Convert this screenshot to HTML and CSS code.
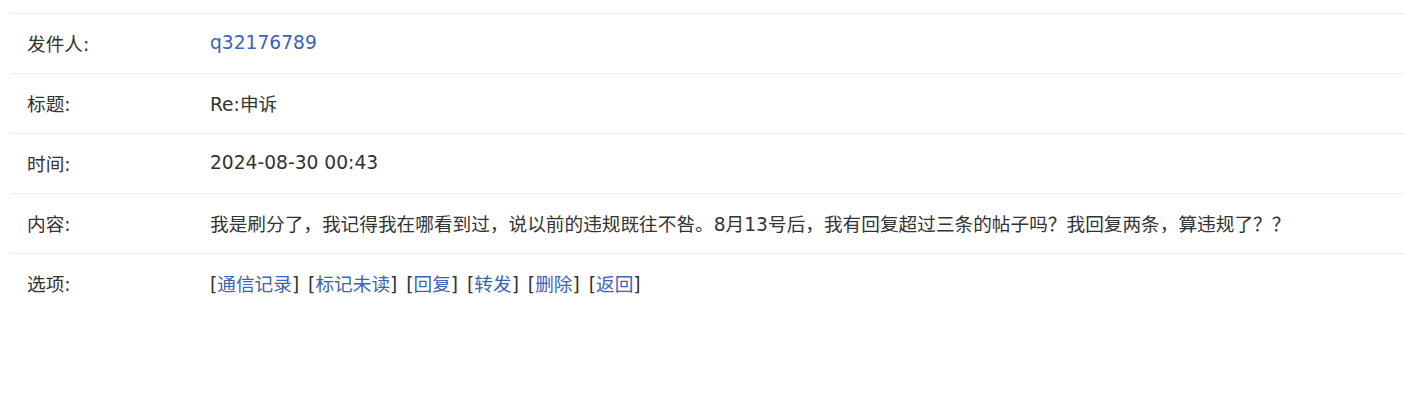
FILE: index.html
```html
<!DOCTYPE html>
<html lang="zh-CN">
<head>
  <meta charset="UTF-8"/>
  <title>短消息</title>
  <link rel="stylesheet" href="styles.css">
</head>
<body>
  <div class="msg-table">
    <div class="row">
      <div class="label">发件人:</div>
      <div class="value"><a href="#">q32176789</a></div>
    </div>
    <div class="row">
      <div class="label">标题:</div>
      <div class="value">Re:申诉</div>
    </div>
    <div class="row">
      <div class="label">时间:</div>
      <div class="value">2024-08-30 00:43</div>
    </div>
    <div class="row">
      <div class="label">内容:</div>
      <div class="value">我是刷分了，我记得我在哪看到过，说以前的违规既往不咎。8月13号后，我有回复超过三条的帖子吗？我回复两条，算违规了？？</div>
    </div>
    <div class="row">
      <div class="label">选项:</div>
      <div class="value options">
        [<a href="#">通信记录</a>] [<a href="#">标记未读</a>] [<a href="#">回复</a>] [<a href="#">转发</a>] [<a href="#">删除</a>] [<a href="#">返回</a>]
      </div>
    </div>
  </div>
</body>
</html>
```

FILE: styles.css
```css
body{
  margin: 0;
  background: #fff;
  font-family: "DejaVu Sans", "Noto Sans CJK SC", sans-serif;
  font-size: 18.67px;
  color: #333;
}
.msg-table{
  margin: 13px 1px 0 10px;
}
.row{
  box-sizing: border-box;
  display: grid;
  grid-template-columns: 200px 1fr;
  height: 60px;
  padding-bottom: 3px;
  align-items: center;
  border-top: 1px solid #eeeeee;
}
.label{
  padding-left: 17px;
}
.value{
  white-space: nowrap;
}
.options{
  word-spacing: 3px;
}
a{
  color: #3c63b6;
  text-decoration: none;
}
```
